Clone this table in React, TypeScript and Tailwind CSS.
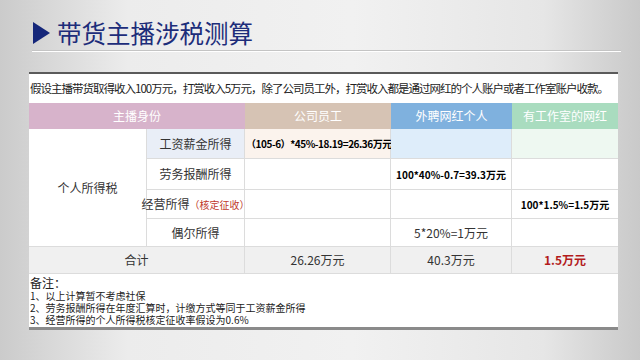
import React from "react";

// tax calc slide: title + one table card

const font = { fontFamily: '"Noto Sans CJK SC", "Noto Sans", sans-serif' };

function Cell({ className = "", children }: { className?: string; children?: React.ReactNode }) {
  return (
    <div className={"flex items-center justify-center border-r border-b border-[#dcdcdc] " + className}>
      {children}
    </div>
  );
}

export default function App() {
  return (
    <div
      className="w-[640px] h-[360px] overflow-hidden bg-[linear-gradient(90deg,#cbcbcb_0%,#ececec_20%,#f1f1f1_55%,#e6e6e6_85%,#c9c9c9_100%)] text-[#333]"
      style={font}
    >
      {/* title */}
      <div className="flex items-center pl-[33px] pt-[15px] h-[50px]">
        <span className="w-0 h-0 border-y-[11px] border-y-transparent border-l-[17px] border-l-[#15277a]" />
        <span className="ml-[7px] text-[24.5px] leading-[30px] text-[#1d2d7a]">带货主播涉税测算</span>
      </div>
      <div className="ml-[32px] w-[589px] h-[2px] border-t border-[#c4c4c4] border-b border-b-white" />

      {/* card */}
      <div className="ml-[29px] mt-[20px] w-[589px] bg-white border-t-2 border-[#5a5a5a] border-b-[3px] border-b-[#8a8a8a]">
        <div className="h-[29px] flex items-center pl-[1px] text-[11.5px] text-[#222] whitespace-nowrap tracking-[-1px] overflow-hidden">
          假设主播带货取得收入100万元，打赏收入5万元，除了公司员工外，打赏收入都是通过网红的个人账户或者工作室账户收款。
        </div>

        <div className="grid grid-cols-[118px_98px_146px_121px_106px] grid-rows-[26px_30px_31px_29px_28px_27px] text-[12px]">
          <div className="col-span-2 flex items-center justify-center bg-[#d7b3cb] text-white">主播身份</div>
          <div className="flex items-center justify-center bg-[#d6c3b4] text-white">公司员工</div>
          <div className="flex items-center justify-center bg-[#7fb1de] text-white">外聘网红个人</div>
          <div className="flex items-center justify-center bg-[#a9dcbf] text-white">有工作室的网红</div>

          <Cell className="row-span-4 bg-white text-[12px]">个人所得税</Cell>
          <Cell className="bg-[#e9eef7]">工资薪金所得</Cell>
          <Cell className="bg-[#fbf3ed] justify-start pl-[1px] text-[10px] font-bold text-black whitespace-nowrap tracking-[-0.45px]">
            （105-6）*45%-18.19=26.36万元
          </Cell>
          <Cell className="bg-[#deedfa]" />
          <Cell className="bg-[#eef8f1] border-r-0" />

          <Cell>劳务报酬所得</Cell>
          <Cell />
          <Cell className="text-[10px] font-bold text-black whitespace-nowrap">100*40%-0.7=39.3万元</Cell>
          <Cell className="border-r-0" />

          <Cell className="whitespace-nowrap">
            经营所得<span className="text-[10px] text-[#c0392b]">（核定征收）</span>
          </Cell>
          <Cell />
          <Cell />
          <Cell className="text-[10px] font-bold text-black border-r-0 whitespace-nowrap">100*1.5%=1.5万元</Cell>

          <Cell>偶尔所得</Cell>
          <Cell />
          <Cell>5*20%=1万元</Cell>
          <Cell className="border-r-0" />

          <Cell className="col-span-2 bg-[#f0f0f0]">合计</Cell>
          <Cell className="bg-[#f0f0f0]">26.26万元</Cell>
          <Cell className="bg-[#f0f0f0]">40.3万元</Cell>
          <Cell className="bg-[#f0f0f0] border-r-0 font-bold text-[#b31b1b]">1.5万元</Cell>
        </div>

        {/* notes */}
        <div className="h-[53px] pl-[1px] pt-[2px] text-[10px] leading-[12px] text-[#222]">
          <div className="text-[12px] leading-[14px]">备注：</div>
          <div>1、以上计算暂不考虑社保</div>
          <div>2、劳务报酬所得在年度汇算时，计缴方式等同于工资薪金所得</div>
          <div>3、经营所得的个人所得税核定征收率假设为0.6%</div>
        </div>
      </div>
    </div>
  );
}
